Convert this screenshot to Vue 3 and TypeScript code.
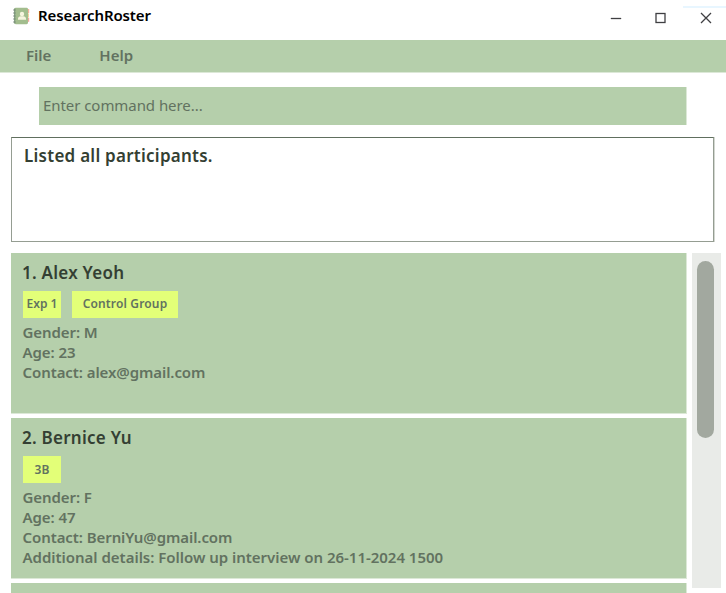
<script setup lang="ts">
interface Participant {
  name: string
  tags: { label: string; kind: string }[]
  details: string[]
}

const menus: string[] = ['File', 'Help']

const participants: Participant[] = [
  {
    name: 'Alex Yeoh',
    tags: [
      { label: 'Exp 1', kind: 'short' },
      { label: 'Control Group', kind: 'long' },
    ],
    details: ['Gender: M', 'Age: 23', 'Contact: alex@gmail.com'],
  },
  {
    name: 'Bernice Yu',
    tags: [{ label: '3B', kind: 'short low' }],
    details: [
      'Gender: F',
      'Age: 47',
      'Contact: BerniYu@gmail.com',
      'Additional details: Follow up interview on 26-11-2024 1500',
    ],
  },
]
</script>

<template>
  <div class="window">
    <header class="titlebar">
      <svg class="logo" width="18" height="18" viewBox="0 0 18 18">
        <rect x="14" y="2" width="2.2" height="4" fill="#f7b09b" />
        <rect x="14" y="6.4" width="2" height="4" fill="#f3d39c" />
        <rect x="14" y="10.8" width="2.2" height="4" fill="#f5a49d" />
        <rect x="1.4" y="0.8" width="13.6" height="16.4" rx="1.4" fill="#a3bd8e" />
        <path d="M1.7 1.6v15" stroke="#85a080" stroke-width="1.3" />
        <path d="M0.2 3h2.4M0.2 6h2.4M0.2 9h2.4M0.2 12h2.4M0.2 15h2.4" stroke="#778879" stroke-width="1" />
        <circle cx="9" cy="7" r="2.2" fill="#f6f4df" />
        <path d="M5 12.8v-1.2c0-1.5 1.2-2.4 2.7-2.4h2.6c1.5 0 2.7.9 2.7 2.4v1.2z" fill="#f6f4df" />
      </svg>
      <h1>ResearchRoster</h1>
      <div class="controls">
        <svg width="12" height="12" viewBox="0 0 12 12"><path d="M.8 6.5h10.4" /></svg>
        <svg width="12" height="12" viewBox="0 0 12 12"><rect x="1" y="1.5" width="9" height="9" /></svg>
        <svg width="12" height="12" viewBox="0 0 12 12"><path d="M1 1l10 10M11 1L1 11" /></svg>
      </div>
    </header>
    <nav class="menubar">
      <span v-for="menu in menus" :key="menu">{{ menu }}</span>
    </nav>
    <div class="command">Enter command here...</div>
    <section class="result">Listed all participants.</section>
    <main class="content">
      <div class="list">
        <article v-for="(person, i) in participants" :key="person.name" class="card">
          <h2>{{ i + 1 }}. {{ person.name }}</h2>
          <div class="tags">
            <span v-for="tag in person.tags" :key="tag.label" class="tag" :class="tag.kind">{{ tag.label }}</span>
          </div>
          <p v-for="line in person.details" :key="line">{{ line }}</p>
        </article>
        <article class="card"></article>
      </div>
      <div class="scrollbar"><div class="thumb"></div></div>
    </main>
  </div>
</template>

<style>
body {
  margin: 0;
  background: #fff;
  overflow: hidden;
}
</style>

<style scoped>
.window {
  width: 726px;
  height: 593px;
  overflow: hidden;
  display: flex;
  flex-direction: column;
  font-family: 'Noto Sans', 'Open Sans', sans-serif;
  font-weight: 600;
  color: #627260;
  white-space: nowrap;
}
h1, h2, p {
  margin: 0;
}
.titlebar {
  height: 40px;
  flex: none;
  display: flex;
  align-items: flex-start;
  box-sizing: border-box;
  padding: 7px 14px 0 13px;
  background: linear-gradient(#e8f6ff, #e8f6ff) 100% 6px / 43px 2px no-repeat;
}
.logo {
  flex: none;
}
h1 {
  margin-left: 7px;
  font-size: 15px;
  line-height: 16px;
  font-weight: 600;
  letter-spacing: -0.1px;
  color: #000;
}
.controls {
  display: flex;
  gap: 33px;
  margin: 5px 0 0 auto;
}
.controls svg {
  fill: none;
  stroke: #3f3f42;
  stroke-width: 1.3;
}
.menubar {
  height: 32px;
  flex: none;
  display: flex;
  gap: 48px;
  padding-left: 26px;
  background: #b5cfab;
  border-bottom: 1px solid #dce8d7;
  font-size: 15px;
  line-height: 30px;
}
.command {
  flex: none;
  width: 643px;
  height: 38px;
  margin: 14px 0 0 39px;
  padding-left: 4px;
  border-right: 1px solid #dce8d7;
  background: #b5cfab;
  font-size: 15px;
  line-height: 36px;
  font-weight: 400;
  letter-spacing: -0.06px;
}
.result {
  flex: none;
  box-sizing: border-box;
  width: 703px;
  height: 105px;
  margin: 12px 0 0 11px;
  padding: 5px 12px;
  border: 1px solid #959d92;
  border-top-color: #606f5e;
  box-shadow: 1px 0 #d3d7d1;
  font-size: 17px;
  line-height: 26px;
  letter-spacing: 0.25px;
  color: #343f33;
}
.content {
  flex: 1;
  min-height: 0;
  display: flex;
  align-items: flex-start;
  gap: 5px;
  margin: 11px 0 0 11px;
}
.list {
  width: 676px;
  display: flex;
  flex-direction: column;
  gap: 4px;
}
.card {
  box-sizing: border-box;
  height: 161px;
  padding: 8px 11px 0;
  border-right: 1px solid #dce8d7;
  border-bottom: 1px solid #dce8d7;
  background: #b5cfab;
}
h2 {
  font-size: 17px;
  line-height: 24px;
  font-weight: 600;
  letter-spacing: 0.25px;
  color: #343f33;
}
.tags {
  display: flex;
  gap: 11px;
  margin: 6px 0 4px 1px;
}
.tag {
  height: 27px;
  font-size: 12px;
  line-height: 26px;
  text-align: center;
  background: #e3ff78;
}
.short {
  width: 38px;
}
.long {
  width: 106px;
  letter-spacing: 0.15px;
}
.low {
  line-height: 28px;
}
p {
  padding-left: 0.5px;
  font-size: 15px;
  line-height: 20px;
  letter-spacing: -0.08px;
}
p:nth-of-type(4) {
  letter-spacing: -0.02px;
}
.scrollbar {
  box-sizing: border-box;
  width: 29px;
  height: 335px;
  padding: 8px 7px 0 5px;
  background: #e9ebe8;
}
.thumb {
  height: 177px;
  border-radius: 9px;
  background: #a2a89f;
}
</style>
